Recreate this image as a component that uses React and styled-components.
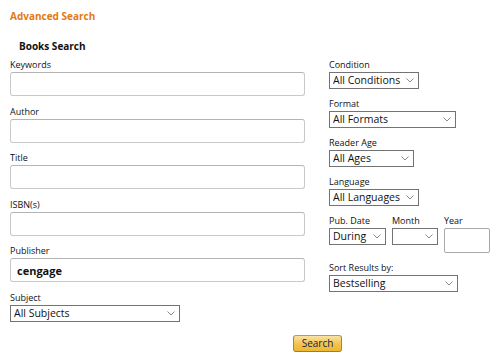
import React from "react";
import styled, { createGlobalStyle } from "styled-components";

const Global = createGlobalStyle`
  html, body { margin: 0; padding: 0; background: #fff; }
  body { font-family: "Open Sans", "Noto Sans", sans-serif; color: #111; }
  * { box-sizing: border-box; }
`;

const Page = styled.div`
  width: 502px;
  height: 362px;
  padding: 9px 0 0 10px;
  overflow: hidden;
`;

const Title = styled.h1`
  margin: 0;
  font-size: 10px;
  line-height: 14px;
  font-weight: 700;
  color: #e47911;
`;

const SubTitle = styled.h2`
  margin: 16px 0 0 9px;
  font-size: 10px;
  line-height: 14px;
  font-weight: 700;
  color: #111;
`;

const Columns = styled.div`
  display: flex;
  gap: 24px;
  margin-top: 5px;
`;

const LeftCol = styled.div`
  width: 295px;
  display: flex;
  flex-direction: column;
`;

const RightCol = styled.div`
  display: flex;
  flex-direction: column;
`;

const Field = styled.div`
  display: flex;
  flex-direction: column;
  align-items: flex-start;
  margin-bottom: ${(p) => p.$mb ?? 8.5}px;
`;

const Label = styled.label`
  font-size: 9px;
  line-height: 13px;
  margin-bottom: 1px;
  color: #111;
  white-space: nowrap;
`;

const TextInput = styled.input`
  display: block;
  width: ${(p) => p.$w ?? 295}px;
  height: ${(p) => p.$h ?? 24}px;
  margin: 0;
  border: 1px solid #c9c9c9;
  border-top-color: #b4b4b4;
  border-radius: 3px;
  padding: 0 6px;
  font-family: inherit;
  font-size: 11px;
  font-weight: 700;
  color: #111;
  background: #fff;
  outline: none;
`;

const SelectWrap = styled.div`
  position: relative;
  width: ${(p) => p.$w}px;
  height: 17px;
`;

const Select = styled.select`
  display: block;
  appearance: none;
  -webkit-appearance: none;
  width: 100%;
  height: 17px;
  border: 1px solid #737373;
  border-radius: 0;
  padding: 0 14px 0 3px;
  margin: 0;
  font-family: inherit;
  font-size: 10.5px;
  line-height: 15px;
  color: #111;
  background: #fff;
  outline: none;
`;

const Chevron = styled.svg`
  position: absolute;
  right: 5px;
  top: 6px;
  width: 8px;
  height: 5px;
  pointer-events: none;
`;

const DropDown = ({ w, value, options = [] }) => (
  <SelectWrap $w={w}>
    <Select defaultValue={value}>
      {[value, ...options].map((o) => (
        <option key={o} value={o}>
          {o}
        </option>
      ))}
    </Select>
    <Chevron viewBox="0 0 8 5">
      <path d="M0.5 0.5 L4 4 L7.5 0.5" fill="none" stroke="#8a8a8a" strokeWidth="1" />
    </Chevron>
  </SelectWrap>
);

const DateRow = styled.div`
  display: flex;
  gap: 6px;
  margin-bottom: 8px;
`;

const DateField = styled.div`
  display: flex;
  flex-direction: column;
  align-items: flex-start;
`;

const YearInput = styled.input`
  display: block;
  margin: 0;
  width: 46px;
  height: 25px;
  border: 1px solid #a8a8a8;
  border-radius: 2px;
  background: #fff;
  outline: none;
`;

const ButtonRow = styled.div`
  display: flex;
  padding-left: 283px;
  margin-top: 13px;
`;

const SearchButton = styled.button`
  display: block;
  width: 49px;
  height: 17px;
  padding: 0;
  margin: 0;
  border: 1px solid #a88734;
  border-color: #c59a3a #a88734 #9c7e31;
  border-radius: 3px;
  background: linear-gradient(to bottom, #f9e3a6, #f2c24a 55%, #edb932);
  font-family: inherit;
  font-size: 10px;
  line-height: 15px;
  color: #131a4a;
  cursor: pointer;
`;

export default function App() {
  return (
    <Page>
      <Global />
      <Title>Advanced Search</Title>
      <SubTitle>Books Search</SubTitle>
      <Columns>
        <LeftCol>
          <Field>
            <Label>Keywords</Label>
            <TextInput />
          </Field>
          <Field>
            <Label>Author</Label>
            <TextInput />
          </Field>
          <Field>
            <Label>Title</Label>
            <TextInput />
          </Field>
          <Field>
            <Label>ISBN(s)</Label>
            <TextInput />
          </Field>
          <Field>
            <Label>Publisher</Label>
            <TextInput defaultValue="cengage" />
          </Field>
          <Field $mb={0}>
            <Label>Subject</Label>
            <DropDown w={170} value="All Subjects" />
          </Field>
        </LeftCol>
        <RightCol>
          <Field $mb={8}>
            <Label>Condition</Label>
            <DropDown w={90} value="All Conditions" />
          </Field>
          <Field $mb={8}>
            <Label>Format</Label>
            <DropDown w={127} value="All Formats" />
          </Field>
          <Field $mb={8}>
            <Label>Reader Age</Label>
            <DropDown w={85} value="All Ages" />
          </Field>
          <Field $mb={8}>
            <Label>Language</Label>
            <DropDown w={90} value="All Languages" />
          </Field>
          <DateRow>
            <DateField>
              <Label>Pub. Date</Label>
              <DropDown w={57} value="During" />
            </DateField>
            <DateField>
              <Label>Month</Label>
              <DropDown w={46} value="" />
            </DateField>
            <DateField>
              <Label>Year</Label>
              <YearInput />
            </DateField>
          </DateRow>
          <Field $mb={0}>
            <Label>Sort Results by:</Label>
            <DropDown w={129} value="Bestselling" />
          </Field>
        </RightCol>
      </Columns>
      <ButtonRow>
        <SearchButton>Search</SearchButton>
      </ButtonRow>
    </Page>
  );
}
